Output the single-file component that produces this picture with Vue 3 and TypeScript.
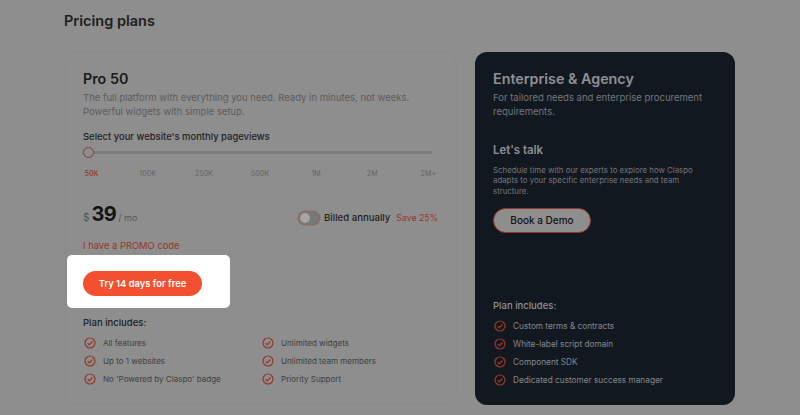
<script setup lang="ts">
const stops: string[] = ['50K', '100K', '250K', '500K', '1M', '2M', '2M+']
const proLeft: string[] = ['All features', 'Up to 1 websites', "No 'Powered by Claspo' badge"]
const proRight: string[] = ['Unlimited widgets', 'Unlimited team members', 'Priority Support']
const enterprise: string[] = ['Custom terms & contracts', 'White-label script domain', 'Component SDK', 'Dedicated customer success manager']
</script>

<template>
  <div class="page">
    <h1 class="heading">Pricing plans</h1>
    <div class="cards">
      <section class="card pro">
        <h2 class="plan-name">Pro 50</h2>
        <p class="desc">The full platform with everything you need. Ready in minutes, not weeks.<br />Powerful widgets with simple setup.</p>
        <div class="select-label">Select your website's monthly pageviews</div>
        <div class="slider"><span class="thumb"></span></div>
        <div class="stops">
          <span v-for="(s, i) in stops" :key="s" class="stop" :class="{ active: i === 0 }">{{ s }}</span>
        </div>
        <div class="price-row">
          <div class="price"><span class="cur">$</span><span class="amount">39</span><span class="per">/ mo</span></div>
          <div class="billing">
            <span class="switch"><span class="knob"></span></span>
            <span class="billed">Billed annually</span>
            <span class="save">Save 25%</span>
          </div>
        </div>
        <div class="promo">I have a PROMO code</div>
        <div class="spot"><button class="cta">Try 14 days for free</button></div>
        <div class="includes">Plan includes:</div>
        <div class="feature-cols">
          <ul class="features">
            <li v-for="f in proLeft" :key="f">
              <svg class="check" viewBox="0 0 12 12"><circle cx="6" cy="6" r="5" /><path d="M3.7 6.1 5.3 7.8 8.4 4.5" /></svg>{{ f }}
            </li>
          </ul>
          <ul class="features">
            <li v-for="f in proRight" :key="f">
              <svg class="check" viewBox="0 0 12 12"><circle cx="6" cy="6" r="5" /><path d="M3.7 6.1 5.3 7.8 8.4 4.5" /></svg>{{ f }}
            </li>
          </ul>
        </div>
      </section>

      <section class="card dark">
        <h2 class="plan-name">Enterprise &amp; Agency</h2>
        <p class="desc">For tailored needs and enterprise procurement requirements.</p>
        <h3 class="talk">Let's talk</h3>
        <p class="sched">Schedule time with our experts to explore how Claspo adapts to your specific enterprise needs and team structure.</p>
        <button class="demo">Book a Demo</button>
        <div class="push"></div>
        <div class="includes">Plan includes:</div>
        <ul class="features">
          <li v-for="f in enterprise" :key="f">
            <svg class="check" viewBox="0 0 12 12"><circle cx="6" cy="6" r="5" /><path d="M3.7 6.1 5.3 7.8 8.4 4.5" /></svg>{{ f }}
          </li>
        </ul>
      </section>
    </div>
  </div>
</template>

<style>
html, body { margin: 0; background: #8e8e8e; }
</style>

<style scoped>
* { box-sizing: border-box; }
.page {
  width: 800px;
  height: 415px;
  overflow: hidden;
  background: #8e8e8e;
  padding: 12px 65px 0 64px;
  font-family: Inter, "Open Sans", sans-serif;
  color: #1c1c1c;
}
.heading { margin: 0; font-size: 14.5px; line-height: 18px; font-weight: 600; color: #1e1e1e; }
.cards { display: flex; gap: 18px; margin-top: 22px; margin-left: 1px; }
.card {
  height: 353px;
  border-radius: 12px;
  padding: 18px;
  display: flex;
  flex-direction: column;
}
.card > * { flex: none; }
.pro { width: 392px; background: #8e8e8e; border: 1px solid #8a8a8a; padding: 17px; }
.dark { width: 260px; background: #12181f; color: #8f9296; padding-bottom: 16px; }
.plan-name { margin: 0; font-size: 14.3px; line-height: 17px; font-weight: 600; }
.pro .plan-name { color: #1a1a1a; }
.dark .plan-name { color: #8e9094; }
.desc { margin: 4px 0 0; font-size: 9.5px; line-height: 13.5px; color: #5c5c5c; }
.dark .desc { color: #74777b; width: 224px; }
.select-label { margin-top: 12px; font-size: 9.45px; line-height: 13px; font-weight: 500; color: #222; }
.slider { position: relative; margin-top: 3px; width: 349px; height: 12px; display: flex; align-items: center; }
.slider::before { content: ""; width: 100%; height: 3px; border-radius: 2px; background: #7c7c7c; }
.thumb {
  position: absolute;
  left: 0;
  top: 0.5px;
  width: 11px;
  height: 11px;
  border-radius: 50%;
  border: 1.3px solid #963628;
  background: #8e8e8e;
}
.stops { display: flex; justify-content: space-between; margin-top: 11px; width: 354px; }
.stop { width: 17px; display: flex; justify-content: center; font-size: 7.2px; line-height: 10px; color: #666; white-space: nowrap; }
.stop.active { color: #963628; font-weight: 500; }
.price-row { display: flex; align-items: center; justify-content: space-between; margin-top: 21px; height: 28px; width: 355px; }
.price { display: flex; align-items: baseline; }
.cur { font-size: 10px; color: #555; margin-right: 2px; }
.amount { font-size: 20px; font-weight: 700; color: #141414; line-height: 28px; letter-spacing: -0.5px; }
.per { font-size: 9px; color: #555; margin-left: 2px; }
.billing { display: flex; align-items: center; margin-top: 7px; }
.switch {
  width: 20px;
  height: 12px;
  border-radius: 6px;
  background: #787878;
  box-shadow: 0 0 0 1.5px #8a6c68;
  padding: 1px;
  display: flex;
  margin-right: 5px;
}
.knob { width: 10px; height: 10px; border-radius: 50%; background: #aaa3a3; }
.billed { font-size: 9.6px; color: #1e1e1e; font-weight: 500; }
.save { font-size: 8.7px; color: #963628; margin-left: 6px; }
.promo { margin-top: 11px; font-size: 9.4px; line-height: 14px; color: #963628; }
.spot {
  margin: 2px 0 0 -16px;
  width: 163px;
  height: 53px;
  background: #fff;
  border-radius: 5px;
  padding: 16px 0 0 16px;
}
.cta {
  display: block;
  width: 119px;
  height: 25px;
  border: 0;
  padding: 0;
  border-radius: 13px;
  background: #f2502f;
  color: #fff;
  font: 600 9.4px Inter, "Open Sans", sans-serif;
}
.includes { font-size: 9.5px; line-height: 13px; font-weight: 500; color: #222; }
.pro .includes { margin-top: 8px; }
.dark .includes { color: #8f9296; }
.feature-cols { display: flex; margin-top: 5px; }
.feature-cols .features { width: 180px; margin-top: 0; }
.features { list-style: none; margin: 5px 0 0; padding: 0; }
.features li {
  display: flex;
  align-items: center;
  height: 18px;
  font-size: 8.05px;
  color: #404040;
  white-space: nowrap;
}
.dark .features li { color: #85888c; font-size: 8.25px; }
.check { width: 12px; height: 12px; margin-right: 7px; margin-left: 1px; flex: none; fill: none; stroke: #963628; stroke-width: 1.2; }
.dark .check { stroke: #9c3829; }
.talk { margin: 25px 0 0; font-size: 11.4px; line-height: 14px; font-weight: 600; color: #8e9094; }
.sched { margin: 8px 0 0; font-size: 7.85px; line-height: 10.3px; color: #74777b; width: 224px; }
.demo {
  display: block;
  margin-top: 12px;
  width: 98px;
  height: 25px;
  border-radius: 13px;
  border: 1.5px solid #963628;
  background: #8e8e8e;
  color: #141414;
  padding: 0;
  font: 500 10px Inter, "Open Sans", sans-serif;
}
.push { flex: 1; }
</style>
